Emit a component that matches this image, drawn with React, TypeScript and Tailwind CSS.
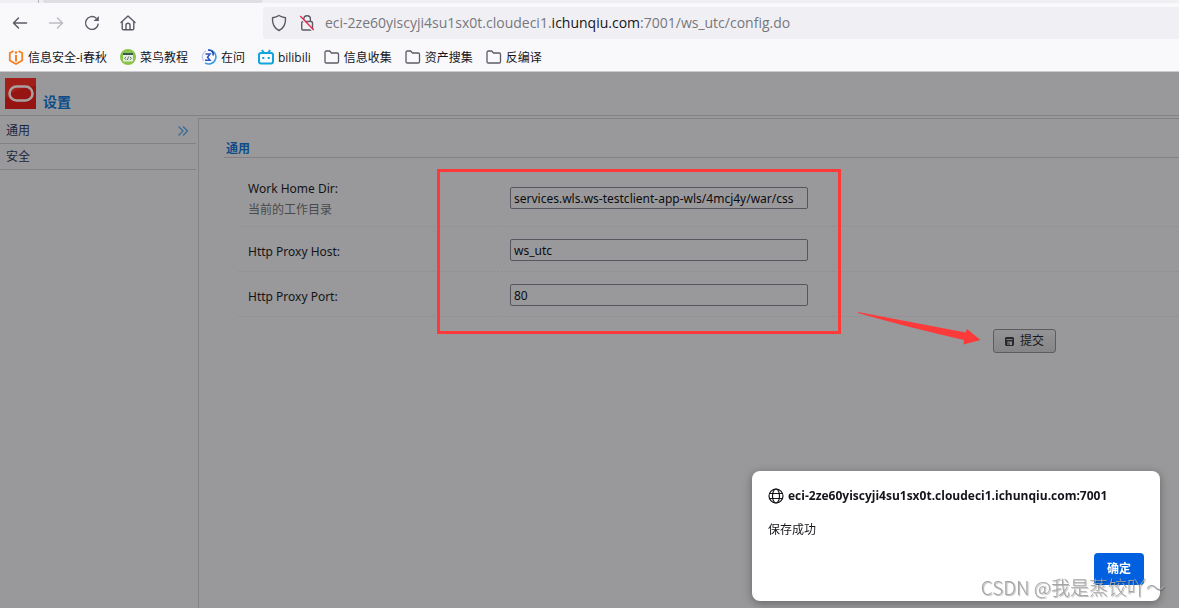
import type { ReactNode } from "react";

const HOST = "eci-2ze60yiscyji4su1sx0t.cloudeci1.ichunqiu.com:7001";

function BackIcon() {
  return (
    <svg width="16" height="16" viewBox="0 0 16 16" fill="none" stroke="#5b5b66" strokeWidth="1.5" strokeLinecap="round" strokeLinejoin="round">
      <path d="M14.5 8h-13M6.500 3 1.500 8l5 5" />
    </svg>
  );
}

function ForwardIcon() {
  return (
    <svg width="16" height="16" viewBox="0 0 16 16" fill="none" stroke="#bcbcc2" strokeWidth="1.5" strokeLinecap="round" strokeLinejoin="round">
      <path d="M1.500 8h13M9.500 3l5 5-5 5" />
    </svg>
  );
}

function ReloadIcon() {
  return (
    <svg width="16" height="16" viewBox="0 0 16 16" fill="none" stroke="#5b5b66" strokeWidth="1.4">
      <path d="M14.3 8.6A6.4 6.4 0 1 1 12.2 3.2" />
      <path d="M14.8 1v5H9.6z" fill="#5b5b66" stroke="none" />
    </svg>
  );
}

function HomeIcon() {
  return (
    <svg width="16" height="16" viewBox="0 0 16 16" fill="none" stroke="#5b5b66" strokeWidth="1.4" strokeLinejoin="round" strokeLinecap="round">
      <path d="M1 7.6 8 1l7 6.6" />
      <path d="M2.2 7v6.4c0 .8.5 1.3 1.3 1.3h9c.8 0 1.3-.5 1.3-1.3V7" />
      <path d="M6 14.5v-4.300c0-1.200.8-2 2-2s2 .8 2 2v4.300" />
    </svg>
  );
}

function ShieldIcon() {
  return (
    <svg width="16" height="18" viewBox="0 0 16 18" fill="none" stroke="#5b5b66" strokeWidth="1.4" strokeLinejoin="round">
      <path d="M8 1.500c1.900 1.300 4 1.900 6.500 2.200C14.900 9.500 13 14 8 16.500 3 14 1.100 9.500 1.500 3.700 4 3.400 6.100 2.800 8 1.500z" />
    </svg>
  );
}

function BrokenLockIcon() {
  return (
    <svg width="16" height="18" viewBox="0 0 16 18" fill="none" stroke="#5b5b66" strokeWidth="1.4">
      <path d="M4.800 7.500V5a3.300 3.300 0 0 1 6.600 0v2.500" />
      <rect x="2.700" y="7.500" width="10.800" height="8.500" rx="1.500" />
      <path d="M1 3.200 13.800 16.800" stroke="#f0f0f4" strokeWidth="1.600" />
      <path d="M1.200 2 14.800 16" stroke="#e22850" strokeWidth="1.300" />
    </svg>
  );
}

function FolderIcon() {
  return (
    <svg width="16" height="16" viewBox="0 0 16 16" fill="none" stroke="#5b5b66" strokeWidth="1.3" strokeLinejoin="round">
      <path d="M1 3.300c0-.8.6-1.300 1.300-1.300h3.400l1.800 2h5.700c.8 0 1.300.5 1.300 1.300v7.400c0 .8-.5 1.300-1.300 1.300H2.300C1.500 14 1 13.500 1 12.700z" />
    </svg>
  );
}

function IchunqiuIcon() {
  return (
    <svg width="16" height="16" viewBox="0 0 16 16" fill="none" stroke="#f58220" strokeWidth="1.8">
      <path d="M5.500 2 1.800 4v7.500L8 15l6.200-3.500V4L10.500 2" />
      <path d="M8 6v6.500" strokeWidth="2" />
      <circle cx="8" cy="3.500" r="1.300" fill="#f58220" stroke="none" />
    </svg>
  );
}

function RunoobIcon() {
  return (
    <svg width="16" height="16" viewBox="0 0 16 16">
      <circle cx="8" cy="8" r="8" fill="#8bc34a" />
      <rect x="3" y="4" width="10" height="8.500" rx="1" fill="#e6eddc" />
      <path d="M3 4h10v2H3z" fill="#3c5a55" />
      <path d="m6 7.800-1.300 1.500L6 10.800m4-3 1.300 1.500L10 10.800M8.600 7.500l-1.200 3.500" fill="none" stroke="#3c5a55" strokeWidth=".8" />
    </svg>
  );
}

function ZaiwenIcon() {
  return (
    <svg width="16" height="16" viewBox="0 0 16 16" fill="none">
      <path d="M2.500 12A7 7 0 0 1 5 1.800" stroke="#b9c6ee" strokeWidth="1.2" />
      <path d="M7.500 1a7 7 0 1 1-3.500 12.800" stroke="#3f9be0" strokeWidth="1.600" />
      <path d="M7 1c3.500 0 6 2 5 5.500" stroke="#2446ad" strokeWidth="1.600" />
      <path d="M4.500 5h4.500L6.500 8.200 9 11.300H4" stroke="#2f55c8" strokeWidth="1.500" />
    </svg>
  );
}

function BilibiliIcon() {
  return (
    <svg width="16" height="16" viewBox="0 0 16 16" fill="none" stroke="#12a5dc" strokeWidth="2">
      <rect x="1" y="4" width="14" height="10.500" rx="2" />
      <path d="M3.800 1 6 3.800M12.200 1 10 3.800M5.300 8v2M10.700 8v2" />
    </svg>
  );
}

const bookmarks: { label: string; icon: ReactNode }[] = [
  { label: "信息安全-i春秋", icon: <IchunqiuIcon /> },
  { label: "菜鸟教程", icon: <RunoobIcon /> },
  { label: "在问", icon: <ZaiwenIcon /> },
  { label: "bilibili", icon: <BilibiliIcon /> },
  { label: "信息收集", icon: <FolderIcon /> },
  { label: "资产搜集", icon: <FolderIcon /> },
  { label: "反编译", icon: <FolderIcon /> },
];

function BrowserChrome() {
  return (
    <header className="border-b border-[#cccccc] bg-[#f9f9fb] font-['Open_Sans','Noto_Sans_CJK_SC',sans-serif]">
      <div className="flex h-[3px] bg-[#f0f0f4]">
        <div className="w-[39px] border-r border-[#b4b4b9]" />
        <div className="ml-1 w-[220px] rounded-b-sm bg-[#dedee3]" />
      </div>
      <div className="flex items-center pt-1">
        <nav className="flex w-[263px] items-center gap-5 pl-3">
          <button aria-label="Back"><BackIcon /></button>
          <button aria-label="Forward"><ForwardIcon /></button>
          <button aria-label="Reload"><ReloadIcon /></button>
          <button aria-label="Home"><HomeIcon /></button>
        </nav>
        <div className="flex h-8 flex-1 items-center rounded-l bg-[#f0f0f4] pl-2 text-[#77777d]">
          <ShieldIcon />
          <span className="ml-3"><BrokenLockIcon /></span>
          <p className="ml-2.5 text-sm">
            eci-2ze60yiscyji4su1sx0t.cloudeci1.<span className="text-[#15141a]">ichunqiu.com</span>:7001/ws_utc/config.do
          </p>
        </div>
      </div>
      <nav className="flex h-8 items-center gap-[13px] pt-1 pl-2 text-xs text-[#15141a]">
        {bookmarks.map((item) => (
          <a key={item.label} href="#" className="flex items-center gap-1 whitespace-nowrap">
            {item.icon}
            <span className="pt-px">{item.label}</span>
          </a>
        ))}
      </nav>
    </header>
  );
}

function OracleLogo() {
  return (
    <svg width="31" height="31" viewBox="0 0 31 31">
      <rect width="31" height="31" fill="#961411" />
      <path d="M0 0h31v8Q14 8 0 20z" fill="#a02019" />
      <rect x="4.500" y="8.500" width="23" height="14" rx="7" fill="none" stroke="#a9a09f" strokeWidth="2.600" />
    </svg>
  );
}

function SaveIcon() {
  return (
    <svg width="9" height="9" viewBox="0 0 9 9">
      <path d="M1 0h7l1 1v7L8 9H1L0 8V1z" fill="#29292b" />
      <path d="M1.500 2.500h6" stroke="#99999b" strokeWidth=".8" />
      <path d="M2.500 4.500h4.500V8H2.500z" fill="#8c8c8e" />
      <path d="M3.500 5.500h1V8h-1z" fill="#29292b" />
    </svg>
  );
}

const fields = [
  { id: "workDir", label: "Work Home Dir:", hint: "当前的工作目录", value: "services.wls.ws-testclient-app-wls/4mcj4y/war/css" },
  { id: "proxyHost", label: "Http Proxy Host:", value: "ws_utc" },
  { id: "proxyPort", label: "Http Proxy Port:", value: "80" },
];

function SettingsForm() {
  return (
    <section className="relative flex-1 border-t border-l border-[#828284] pt-5 pl-[25px]">
      <h2 className="border-b border-[#828284] pt-px pl-0.5 text-xs leading-[17px] font-bold text-[#0d4c89]">通用</h2>
      <form className="pl-[15px]" onSubmit={(e) => e.preventDefault()}>
        {fields.map((field) => (
          <div key={field.id} className="flex gap-[3px]">
            <div
              className={`flex w-[259px] flex-col justify-center border-b border-dotted border-[#8e8e90] pl-[9px] ${field.hint ? "h-[69px] pt-3.5" : "h-[45px] pt-1"}`}
            >
              <label htmlFor={field.id} className="text-xs leading-[21px] text-[#141416]">{field.label}</label>
              {field.hint && <p className="text-xs leading-[21px] text-[#4a4a4c]">{field.hint}</p>}
            </div>
            <div
              className={`flex flex-1 items-center border-b border-dotted border-[#8e8e90] pl-[9px] ${field.hint ? "pt-3" : "pt-0.5"}`}
            >
              <input
                id={field.id}
                type="text"
                defaultValue={field.value}
                className="h-[22px] w-[298px] rounded-xs border border-[#57565f] px-[3px] text-xs text-[#0c0c10]"
              />
            </div>
          </div>
        ))}
        <div className="flex justify-end pt-3 pr-[123px]">
          <button className="flex h-6 items-center gap-1.5 rounded-[3px] border border-[#5c5c5e] bg-linear-to-b from-[#949496] to-[#868688] px-[11px] text-xs text-[#1a1a1c]">
            <SaveIcon />
            提交
          </button>
        </div>
      </form>

      {/* Marked area and the arrow to the submit button */}
      <div className="pointer-events-none absolute top-[50px] left-[238px] h-[165px] w-[404px] border-3 border-[#fc3a3a]" />
      <svg className="pointer-events-none absolute top-[192px] left-[658px]" width="126" height="36" viewBox="0 0 126 36">
        <path d="M1 1 108.500 21.500 110 18l13.500 11-17 4.500.5-4.500Q50 16 1 2z" fill="#fc3a3a" />
      </svg>
    </section>
  );
}

function AlertDialog() {
  return (
    <div
      role="alertdialog"
      aria-labelledby="alert-title"
      className="fixed right-[19px] bottom-[7px] flex h-[130px] w-[408px] flex-col rounded-lg bg-white p-4 pt-[17px] font-['Open_Sans','Noto_Sans_CJK_SC',sans-serif] text-xs text-[#15141a] shadow-[0_2px_10px_rgba(0,0,0,0.35)]"
    >
      <h2 id="alert-title" className="flex items-center gap-1 leading-4 font-bold">
        <svg width="16" height="16" viewBox="0 0 16 16" fill="none" stroke="#15141a" strokeWidth="1.2">
          <circle cx="8" cy="8" r="7" />
          <ellipse cx="8" cy="8" rx="3.500" ry="7" />
          <path d="M1.500 5.500h13M1.500 10.500h13" />
        </svg>
        {HOST}
      </h2>
      <p className="mt-4 leading-5">保存成功</p>
      <button className="mt-auto h-8 w-[50px] self-end rounded bg-[#0060df] font-semibold text-white">确定</button>
    </div>
  );
}

export default function App() {
  return (
    <div className="flex min-h-screen flex-col bg-[#99999b] font-['Noto_Sans','Noto_Sans_CJK_SC',sans-serif]">
      <BrowserChrome />
      <div className="flex h-11 items-end gap-[7px] border-b border-[#828284] pb-1.5 pl-[5px]">
        <OracleLogo />
        <h1 className="-mb-[3px] text-sm font-bold text-[#0d4c89]">设置</h1>
      </div>
      <div className="flex flex-1">
        <aside className="w-[196px] text-xs text-[#1c2640]">
          <a href="#" className="flex h-7 items-center justify-between border-b border-[#828284] pt-0.5 pr-2 pl-1.5">
            通用
            <svg width="10" height="10" viewBox="0 0 10 10" fill="none" stroke="#3b6c99" strokeWidth="1.3">
              <path d="m.5.5 4.500 4.500L.5 9.500M5 .5 9.500 5 5 9.500" />
            </svg>
          </a>
          <a href="#" className="flex h-[26px] items-center border-b border-[#828284] pl-1.5">安全</a>
        </aside>
        <main className="flex flex-1 pt-0.5 pl-0.5">
          <SettingsForm />
        </main>
      </div>
      <AlertDialog />
      <p className="pointer-events-none fixed right-[14px] bottom-[7px] font-['Noto_Sans_CJK_SC',sans-serif] text-[19px] leading-7 font-light text-[#a4a4a6] [text-shadow:1px_1px_1px_rgba(0,0,0,0.3)]">
        CSDN @我是蒸饺吖～
      </p>
    </div>
  );
}
